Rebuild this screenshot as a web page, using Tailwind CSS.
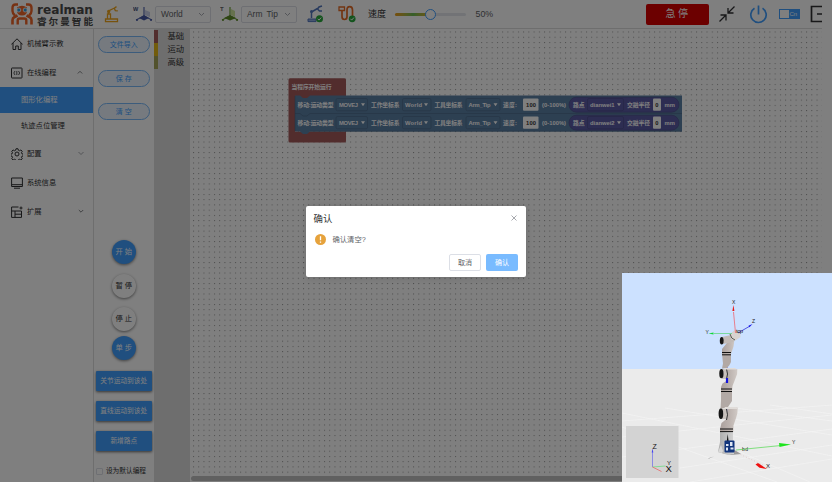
<!DOCTYPE html>
<html lang="zh-CN">
<head>
<meta charset="utf-8">
<title>Realman</title>
<script src="https://cdn.jsdelivr.net/npm/@tailwindcss/browser@4"></script>
</head>
<body class="relative w-[832px] h-[482px] overflow-hidden bg-white font-['Liberation_Sans','Noto_Sans_CJK_SC',sans-serif] text-[7.3px] leading-none text-[#303133]">
<div class="flex h-full flex-col">
  <header class="flex h-[29px] w-[822px] shrink-0 items-center overflow-hidden border-b border-[#dcdcdc] whitespace-nowrap">
    <svg class="ml-[11px] h-[22px] w-[22px] shrink-0" viewBox="0 0 22 22" fill="none">
      <path d="M7 1.500H4.500Q1.500 1.500 1.500 5v3q0 2.500 2.500 4.500M15 1.500h2.500q3 0 3 3.500v3q0 2.500-2.500 4.500" stroke="#ee6428" stroke-width="2.400"/>
      <path d="M6 4.500q5-3.500 10 0v3q0 5-5 5t-5-5z" fill="#ee6428"/>
      <path d="M1.500 21.500V17q0-2 2-3l3-1.500M20.500 21.500V17q0-2-2-3l-3-1.500" stroke="#ee6428" stroke-width="2.600"/>
      <path d="M6.700 21.500v-4q0-2 2-2h4.600q2 0 2 2v4" stroke="#ee6428" stroke-width="2.400"/>
      <circle cx="7.800" cy="7" r="2" fill="#2c9fe0" stroke="#fff" stroke-width=".8"/><circle cx="14.200" cy="7" r="2" fill="#2c9fe0" stroke="#fff" stroke-width=".8"/>
    </svg>
    <svg class="ml-[4px] h-[26px] w-[57px] shrink-0" viewBox="0 0 57 26" fill="#4a4a4a">
      <text x="0" y="12.800" font-size="13" font-weight="bold" font-family="DejaVu Sans" textLength="56" lengthAdjust="spacingAndGlyphs">realman</text>
      <text x="0" y="23.700" font-size="9.600" font-weight="bold" font-family="Noto Sans CJK SC" textLength="56">睿尔曼智能</text>
    </svg>
    <svg class="ml-[10px] h-[17px] w-[16px] shrink-0" viewBox="0 0 16 17" fill="none" stroke="#efa51c" stroke-width="1.300">
      <path d="M1.500 13h12v2.600h-12zM3.500 13V8h3v5M4.500 8V5l6-3M12.500.6l-2.200 1.600 1 2.400 2.500.3"/><circle cx="4.700" cy="5.500" r="1"/>
    </svg>
    <svg class="ml-[13px] h-[20px] w-[20px] shrink-0" viewBox="0 0 20 20">
      <text x="0" y="6.500" font-size="5.500" font-weight="bold" fill="#3f4b78" font-family="Liberation Sans">W</text>
      <path d="M11 3v9l8 4M11 12l-8 4" stroke="#5769b0" stroke-width="1.200" fill="none"/><path d="M12 6l5 2v5l-5-2z" fill="#c9cfe8"/><path d="M11 11l5 3-5 2.500L6 14z" fill="#4659a5"/><circle cx="18" cy="16" r="1" fill="#4659a5"/><circle cx="4" cy="16" r="1" fill="#4659a5"/>
    </svg>
    <div class="ml-[2px] flex h-[17px] w-[56px] shrink-0 items-center justify-between rounded-[2px] border border-[#dcdfe6] pr-[5px] pl-[5px] text-[8.400px] text-[#606266]"><span>World</span><svg class="h-[5px] w-[7px]" viewBox="0 0 7 5" fill="none" stroke="#a8abb2"><path d="M1 1l2.500 2.500L6 1"/></svg></div>
    <svg class="ml-[9px] h-[20px] w-[20px] shrink-0" viewBox="0 0 20 20">
      <text x="0" y="6.500" font-size="6" font-weight="bold" fill="#666" font-family="Liberation Sans">T</text>
      <path d="M10 3v9l8 4M10 12l-8 4" stroke="#71a436" stroke-width="1.200" fill="none"/><path d="M11 5l4 2v6l-4-2z" fill="#cde49b"/><path d="M10 11l6 3-6 2.500L4 14z" fill="#5c8b27"/><circle cx="17" cy="16" r="1" fill="#5c8b27"/><circle cx="3" cy="16" r="1" fill="#5c8b27"/>
    </svg>
    <div class="ml-[1px] flex h-[17px] w-[56px] shrink-0 items-center justify-between rounded-[2px] border border-[#dcdfe6] pr-[5px] pl-[5px] text-[8.400px] text-[#606266]"><span class="[word-spacing:2px]">Arm Tip</span><svg class="h-[5px] w-[7px]" viewBox="0 0 7 5" fill="none" stroke="#a8abb2"><path d="M1 1l2.500 2.500L6 1"/></svg></div>
    <svg class="ml-[10px] h-[18px] w-[17px] shrink-0" viewBox="0 0 17 18" fill="none">
      <path d="M4.500 13V7l6-3.500M15 1l-3 1-1.500 2 2 2h2.500" stroke="#5377bd" stroke-width="1.500"/><circle cx="4.500" cy="6.500" r="1.500" fill="#5377bd"/><path d="M1 14h8v2.600H1z" stroke="#5377bd" fill="#8eabdf"/><circle cx="12.500" cy="13.800" r="3.500" fill="#27a83b"/><path d="M10.800 13.800l1.200 1.300 2.200-2.500" stroke="#fff"/>
    </svg>
    <svg class="ml-[14px] h-[18px] w-[18px] shrink-0" viewBox="0 0 18 18" fill="none">
      <path d="M4 5v6.500c0 4 5 4 5 0V5c0-4.500 5.500-4.500 5.500 0v6" stroke="#e46b25" stroke-width="1.700"/><path d="M1 2h5.500v3.500H1z" stroke="#e46b25" stroke-width="1.300"/><circle cx="14.200" cy="13.800" r="3.400" fill="#27a83b"/><path d="M12.500 13.800l1.200 1.300 2.200-2.500" stroke="#fff"/>
    </svg>
    <span class="ml-[12px] w-[18px] shrink-0 text-[9px]">速度</span>
    <div class="relative ml-[9px] h-[3px] w-[71px] shrink-0 rounded-full bg-[#e4e7ed]">
      <div class="h-full w-1/2 rounded-full bg-linear-to-r from-[#ef9d10] via-[#69bd55] to-[#e6a817]"></div>
      <div class="absolute -top-[4px] left-[30px] h-[11px] w-[11px] rounded-full border-[1.300px] border-[#409eff] bg-white"></div>
    </div>
    <span class="ml-[9.500px] w-[20px] shrink-0 text-[8.800px] text-[#606266]">50%</span>
    <button class="ml-[150px] flex h-[21px] w-[63px] shrink-0 items-center justify-center rounded-[2px] bg-[#d80000] text-[10px] tracking-[2.500px] text-white"><span class="ml-[2px]">急停</span></button>
    <svg class="ml-[10.500px] h-[16px] w-[16px] shrink-0" viewBox="0 0 16 16" fill="none" stroke="#303133" stroke-width="1.300"><path d="M15.500 .5L9 7M9 2v5h5.500M.5 15.500L7 9M1.500 9H7v5.500"/></svg>
    <svg class="ml-[14px] h-[19px] w-[19px] shrink-0" viewBox="0 0 19 19" fill="none" stroke="#409eff" stroke-width="1.700"><path d="M5.500 3.200a7.700 7.700 0 1 0 8 0M9.500 .5v9"/></svg>
    <div class="ml-[10.500px] flex h-[10px] w-[21px] shrink-0 bg-[#409eff] p-px text-[6px] text-white"><span class="h-full w-[9px] bg-white"></span><span class="ml-px pt-px">Cn</span></div>
    <svg class="ml-[10px] h-[18px] w-[16px] shrink-0" viewBox="0 0 16 18" fill="none" stroke="#303133" stroke-width="1.700"><path d="M13 5V1.500H1.500v15H13V13M7 9h9"/></svg>
  </header>
  <div class="flex min-h-0 flex-1">
    <nav class="flex w-[94px] shrink-0 flex-col border-r border-[#dcdcdc] whitespace-nowrap">
      <div class="flex h-[29px] items-center pl-[11px]"><svg class="mr-[4px] h-[12px] w-[12px]" viewBox="0 0 12 12" fill="none" stroke="#303133"><path d="M.3 6.500L6 .8l5.700 5.700M2 5v6.500h2.700V8h2.600v3.500H10V5"/></svg>机械臂示教</div>
      <div class="flex h-[29px] items-center pl-[11px]"><svg class="mr-[4px] h-[12px] w-[12px]" viewBox="0 0 12 12" fill="none" stroke="#303133"><rect x=".5" y="1" width="10.500" height="10" rx=".5"/><path d="M4 4L2.800 6 4 8M7.500 4l1.200 2-1.200 2M5.800 4v4" stroke-width=".8"/></svg>在线编程<svg class="ml-[21px] h-[5px] w-[6px]" viewBox="0 0 6 5" fill="none" stroke="#606266" stroke-width=".8"><path d="M.8 3.500L3 1.300l2.200 2.200"/></svg></div>
      <div class="flex h-[26px] items-center bg-[#409eff] pl-[21px] text-white">图形化编程</div>
      <div class="flex h-[26px] items-center pl-[21px]">轨迹点位管理</div>
      <div class="flex h-[29px] items-center pl-[11px]"><svg class="mr-[4px] h-[12px] w-[12px]" viewBox="0 0 24 24" fill="none" stroke="#303133" stroke-width="2" stroke-linejoin="round"><circle cx="12" cy="12" r="4"/><path d="M10 1.500h4l.8 3 2.200 1 2.800-1.600 2.700 2.700-1.600 2.900.9 2 2.700.7v3.600l-2.700.8-.9 2 1.600 2.800-2.700 2.700-2.800-1.600-2.200.9-.8 2.600h-4l-.8-2.600-2.200-.9-2.800 1.600-2.700-2.700 1.600-2.800-.9-2-2.700-.8v-3.600l2.700-.7.9-2-1.600-2.900 2.700-2.700L7 5.500l2.200-1z"/></svg>配置<svg class="ml-[36px] h-[5px] w-[6px]" viewBox="0 0 6 5" fill="none" stroke="#909399" stroke-width=".8"><path d="M.5 1L3 3.500 5.500 1"/></svg></div>
      <div class="flex h-[29px] items-center pl-[11px]"><svg class="mr-[4px] h-[12px] w-[12px]" viewBox="0 0 12 12" fill="none" stroke="#303133"><path d="M.6 1h10.800v8.500H.6zM.6 7.700h10.800M3 11.200h6"/></svg>系统信息</div>
      <div class="flex h-[29px] items-center pl-[11px]"><svg class="mr-[4px] h-[12px] w-[12px]" viewBox="0 0 12 12" fill="none" stroke="#303133"><path d="M7.500 1H.6v10.400h9.900V5H.6M4 5v6.400M4 8.200h6.500M10 .5v3M8.500 2h3"/></svg>扩展<svg class="ml-[36px] h-[5px] w-[6px]" viewBox="0 0 6 5" fill="none" stroke="#606266" stroke-width=".8"><path d="M.8 1L3 3.200 5.200 1"/></svg></div>
    </nav>
    <aside class="flex w-[59.500px] shrink-0 flex-col items-center whitespace-nowrap">
      <div class="mt-[7px] flex h-[17px] w-[52px] items-center justify-center rounded-full border border-[#79b8f8] bg-[#ecf5ff] text-[7px] text-[#409eff]">文件导入</div>
      <div class="mt-[17px] flex h-[17px] w-[52px] items-center justify-center rounded-full border border-[#79b8f8] bg-[#ecf5ff] text-[7px] text-[#409eff]">保 存</div>
      <div class="mt-[16px] flex h-[17px] w-[52px] items-center justify-center rounded-full border border-[#79b8f8] bg-[#ecf5ff] text-[7px] text-[#409eff]">清 空</div>
      <div class="mt-[120px] flex size-[24px] items-center justify-center rounded-full bg-[#409eff] text-white shadow-[0_1px_3px_rgba(0,0,0,.5)]">开 始</div>
      <div class="mt-[10px] flex size-[24px] items-center justify-center rounded-full bg-white shadow-[0_1px_3px_rgba(0,0,0,.5)]">暂 停</div>
      <div class="mt-[9px] flex size-[24px] items-center justify-center rounded-full bg-white shadow-[0_1px_3px_rgba(0,0,0,.5)]">停 止</div>
      <div class="mt-[5px] flex size-[24px] items-center justify-center rounded-full bg-[#409eff] text-white shadow-[0_1px_3px_rgba(0,0,0,.5)]">单 步</div>
      <div class="mt-[11px] flex h-[20px] w-[56px] items-center justify-center rounded-[1px] bg-[#409eff] text-[6.700px] text-white shadow-[0_1px_3px_rgba(0,0,0,.6)]">关节运动到该处</div>
      <div class="mt-[10px] flex h-[20px] w-[56px] items-center justify-center rounded-[1px] bg-[#409eff] text-[6.700px] text-white shadow-[0_1px_3px_rgba(0,0,0,.6)]">直线运动到该处</div>
      <div class="mt-[10px] flex h-[20px] w-[56px] items-center justify-center rounded-[1px] bg-[#409eff] text-[6.700px] text-white shadow-[0_1px_3px_rgba(0,0,0,.6)]">新增路点</div>
      <div class="mt-[17px] mr-[5px] flex items-center gap-[2.500px] text-[6.700px]"><span class="size-[7px] rounded-[1px] border border-[#dcdfe6]"></span>设为默认编程</div>
    </aside>
    <div class="flex w-[36.500px] shrink-0 flex-col bg-[#ddd] pt-[1px] text-[8.300px] text-[#333]">
      <div class="flex h-[13px] items-center border-l-[4px] border-[#a55b5b] pl-[10px]">基础</div>
      <div class="flex h-[13px] items-center border-l-[4px] border-[#e5b818] pl-[10px]">运动</div>
      <div class="flex h-[13px] items-center border-l-[4px] border-[#a5a55b] pl-[10px]">高级</div>
    </div>
    <main class="w-[632px] shrink-0">
      <svg class="block h-[453px] w-[632px]" viewBox="190 29 632 453" font-family="Liberation Sans, Noto Sans CJK SC, sans-serif" font-size="5.800" font-weight="bold">
        <defs><pattern id="grid" x="193" y="31.500" width="5.240" height="5.240" patternUnits="userSpaceOnUse"><rect x="0" y="0" width="1" height="1" fill="#999"/></pattern>
        <g id="row" fill="#fff">
          <rect x="336" y="98.500" width="31.500" height="12.300" rx="1.500" fill="#5b80a5" stroke="#496684" stroke-width=".6"/>
          <rect x="402.500" y="98.500" width="28.500" height="12.300" rx="1.500" fill="#5b80a5" stroke="#496684" stroke-width=".6"/>
          <rect x="466" y="98.500" width="34" height="12.300" rx="1.500" fill="#5b80a5" stroke="#496684" stroke-width=".6"/>
          <rect x="523" y="98.500" width="15.500" height="12.300" rx="1"/>
          <rect x="569" y="97.200" width="110" height="15" rx="7.500" fill="#5b5ba5" stroke="#494984" stroke-width=".6"/>
          <rect x="587.500" y="98.500" width="36" height="12.300" rx="1.500" fill="#5b5ba5" stroke="#494984" stroke-width=".6"/>
          <rect x="653" y="98.500" width="8" height="12.300" rx="1"/>
          <text x="297.500" y="107" textLength="36">移动:运动类型</text><text x="339" y="107" textLength="19">MOVEJ</text>
          <text x="371" y="107" textLength="28.500">工作坐标系</text><text x="405" y="107" textLength="17">World</text>
          <text x="434.500" y="107" textLength="28">工具坐标系</text><text x="468.500" y="107" textLength="22">Arm_Tip</text>
          <text x="503" y="107" textLength="14">速度:</text><text x="526" y="107" textLength="10" fill="#333">100</text>
          <text x="542" y="107" textLength="24">(0-100%)</text><text x="573" y="107" textLength="11.500">路点</text>
          <text x="627" y="107" textLength="23">交融半径</text><text x="655.300" y="107" fill="#333">0</text><text x="664.500" y="107" textLength="10.500">mm</text>
          <path d="M361 103.300h4l-2 3zM424 103.300h4l-2 3zM493.500 103.300h4l-2 3zM617 103.300h4l-2 3z"/>
        </g></defs>
        <rect x="190" y="29" width="632" height="447" fill="url(#grid)"/>
        <path d="M290 78.300h54.500q1.500 0 1.500 1.500V98H295v33.500h51V141q0 1.500-1.500 1.500H290q-1.500 0-1.500-1.500V79.800q0-1.500 1.500-1.500z" fill="#a55b5b"/>
        <text x="291.500" y="89.300" fill="#fff" textLength="40">当程序开始运行</text>
        <path d="M295 95.500h5l3 2.500h4l3-2.500H682v36H310l-3 2.500h-4l-3-2.500h-5z" fill="#5b80a5"/>
        <path d="M295 113.500h5l3 2.500h4l3-2.500H682M295 96V131M310 131.200H682" fill="none" stroke="#496684" stroke-width=".6"/>
        <use href="#row"/><use href="#row" y="18"/>
        <text x="590" y="107" fill="#fff" textLength="24.500">dianwei1</text><text x="590" y="125" fill="#fff" textLength="24.500">dianwei2</text>
        <rect x="191" y="476" width="631" height="5" rx="2.500" fill="#c0c0c0"/>
      </svg>
    </main>
  </div>
</div>

<div class="absolute inset-0 bg-black/50"></div>

<section class="absolute top-[205.500px] left-[305.500px] flex h-[71px] w-[220.500px] flex-col rounded-[2px] bg-white shadow-[0_1px_6px_rgba(0,0,0,.15)]">
  <div class="flex items-center justify-between pt-[8px] pr-[9px] pl-[8px] text-[9.400px]"><span>确认</span><svg class="h-[6px] w-[6px]" viewBox="0 0 6 6" fill="none" stroke="#909399" stroke-width=".8"><path d="M.5.5l5 5M5.500.5l-5 5"/></svg></div>
  <div class="mt-[11px] flex items-center pl-[9px] text-[#606266]"><svg class="mr-[7px] h-[11px] w-[11px]" viewBox="0 0 11 11"><circle cx="5.500" cy="5.500" r="5.500" fill="#e6a23c"/><path d="M5.500 2.300v4M5.500 7.500v1.300" stroke="#fff" stroke-width="1.300"/></svg>确认清空?</div>
  <div class="mt-[9px] flex justify-end gap-[5px] pr-[8px]">
    <button class="h-[17px] w-[32px] rounded-[2px] border border-[#dcdfe6] text-[7px] text-[#606266]">取消</button>
    <button class="h-[17px] w-[32px] rounded-[2px] bg-[#79bbff] text-[7px] text-white">确认</button>
  </div>
</section>

<svg class="absolute top-[273px] left-[622px] h-[209px] w-[210px]" viewBox="622 273 210 209" font-family="Liberation Sans, sans-serif">
  <defs>
    <linearGradient id="arm"><stop stop-color="#aaa09c"/><stop offset=".55" stop-color="#bdb4b0"/><stop offset="1" stop-color="#d0c9c5"/></linearGradient>
    <linearGradient id="base"><stop stop-color="#aaa"/><stop offset="1" stop-color="#d4d4d4"/></linearGradient>
  </defs>
  <rect x="622" y="273" width="210" height="96" fill="#cce1ff"/><rect x="622" y="369" width="210" height="113" fill="#ebebeb"/>
  <path d="M622 413l210 43M622 427l155 55M665 408l167 27M720 406l112 15M770 405l62 9M622 421l210-16M622 437l210-22M622 457l210-28M680 468l152-23M690 482l142-23M740 452l70 30" fill="none" stroke="#f5f5f5" stroke-width=".6"/>
  <path d="M708 459l6-2.500-5 1.500z" fill="#999"/><path d="M722 453l11-4 8 5-10 1z" fill="#999"/>
  <path d="M727 363v90" stroke="#2222e8" stroke-width=".8"/>
  <path d="M720 432h13v8l1 14-6 1-10-3 2-10z" fill="url(#base)"/><path d="M718 452l3-7 2 6-1 2z" fill="#d9d9d9"/>
  <path d="M720 429l1.500-6 5-4 1-11.500h10.200q.2 5-1.500 10l-2.700 8-.2 6.500H720z" fill="url(#arm)"/>
  <path d="M721 391h11v10l-4 6-7.500 2 .5-8z" fill="#b2a9a5"/>
  <path d="M721 391v-4l1.500-3.500 4.500-3V369h10.300q.3 5-1.300 8l-3.500 9-.5 5z" fill="url(#arm)"/>
  <path d="M722 354h9v8q-1 3-4 6l-5 .5 1-5z" fill="#b2a9a5"/>
  <path d="M722 354v-5l4.500-5.500 1-7.500h7.500l-1.500 10.500-2.500 7.500z" fill="url(#arm)"/>
  <path d="M722 337l9-2 3-4 4 5-5 6-10 2z" fill="#c2bbb7"/>
  <path d="M730 334l5-4 5 2 .500 5-5 3.500-4-1z" fill="#d8d3cf"/><path d="M730 334q1 5 5 6" fill="none" stroke="#4b4c42" stroke-width=".9"/>
  <path d="M722 369h5v10h-5zM721 409h6v10h-6z" fill="#c8c1bd"/><path d="M726.500 369q2 5 0 10M726.500 409q2 6 0 11" stroke="#333" stroke-width="1" fill="none"/>
  <path d="M724 369.500l1-1.500h10l2 1.500zM724 409l1-2h11l2 2z" fill="#e0dcd9"/>
  <ellipse cx="721.700" cy="340.700" rx="1.900" ry="3.800" fill="#151515"/><ellipse cx="721.400" cy="373.700" rx="2.100" ry="4.600" fill="#151515"/><ellipse cx="720.900" cy="413.700" rx="2.300" ry="5.300" fill="#151515"/>
  <path d="M722 352.500h9M722 354.800h9M721 389h11M721 391.500h11M720 429h13M720 431.600h13" stroke="#111" stroke-width="1"/>
  <path d="M727 378v5" stroke="#1414dd" stroke-width="2.200"/><path d="M727.700 434l1 8h-2z" fill="#111"/>
  <rect x="724.500" y="440.500" width="10" height="12" rx="1" fill="#12357c"/><path d="M726 444h2.500v2H726zm4-2h2.500v4H730zm-4 5.500h2v3h-2zm4.500 0h3v2h-3z" fill="#dfe6f2"/>
  <path d="M735.500 333l-2-21" stroke="#ef6670" stroke-width=".8"/><path d="M733.400 305l1 6h-2z" fill="#e81818"/>
  <path d="M732 333.500H714" stroke="#65d787" stroke-width=".8"/><path d="M708.500 333.500l5-1v2z" fill="#12d83a"/>
  <path d="M738 333l12-7" stroke="#4343dd" stroke-width=".9"/><path d="M752.500 324l-3 3.300-1-1.500z" fill="#1818ec"/>
  <g fill="#222" font-size="5"><text x="732" y="303.500">X</text><text x="752" y="323">Z</text><text x="705.500" y="333.500">Y</text><text x="736" y="333" font-size="6" textLength="7">tcp</text><text x="742" y="451" textLength="6">bd</text><text x="792" y="444">Y</text><text x="766" y="468" font-size="6">X</text></g>
  <path d="M736 450l45-4.500" stroke="#52d84f" stroke-width=".7"/><path d="M791 444.500l-12-1.400.5 4z" fill="#1de41d"/>
  <path d="M735 452l28 13" stroke="#c99" stroke-width=".4" stroke-dasharray="1 2"/><path d="M767 469l-7.500-1.300-4-3.200 2.500-1.500z" fill="#ef1010"/>
  <rect x="626" y="426" width="52.500" height="52" fill="#d3d3d3"/>
  <path d="M652.500 467v-16" stroke="#7777e8" stroke-width=".8"/><path d="M652.500 448.500l.8 4h-1.600z" fill="#4444f0"/><path d="M652.500 467l13-1" stroke="#70da85" stroke-width=".8"/><path d="M652.500 467l9 4.500" stroke="#e76868" stroke-width=".8"/>
  <g fill="#111"><text x="652.500" y="449" font-size="7">Z</text><text x="667" y="464.500" font-size="6">Y</text><text x="665.500" y="472" font-size="9.500">X</text></g>
</svg>
</body>
</html>
